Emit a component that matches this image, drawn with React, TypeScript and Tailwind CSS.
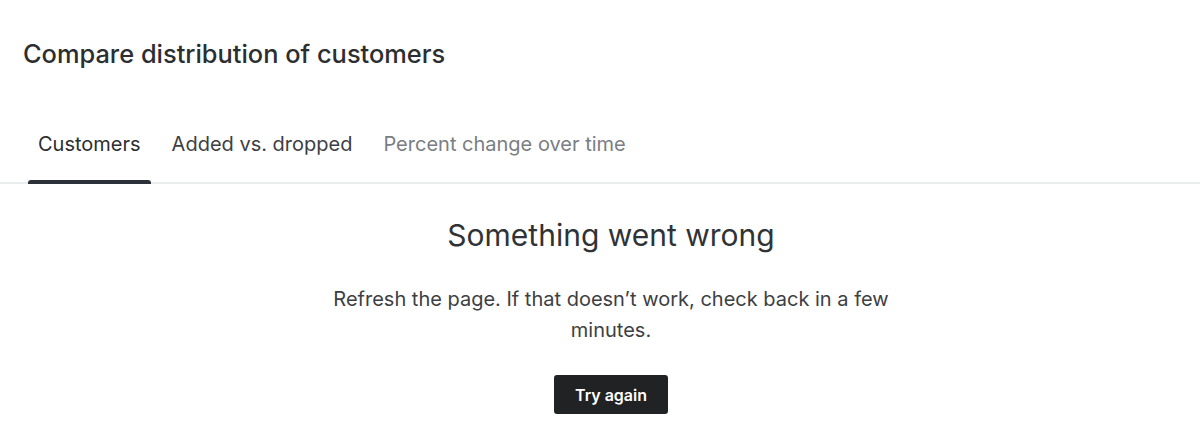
import React from "react";

const tabs = [
  { id: 1, name: "Customers", active: true, tone: "text-[#2c2e30]" },
  { id: 2, name: "Added vs. dropped", active: false, tone: "text-[#3d4043]" },
  { id: 3, name: "Percent change over time", active: false, tone: "text-[#7a7e83]" },
];

export default function App() {
  return (
    <div
      className="w-[1200px] h-[436px] bg-white overflow-hidden"
      style={{ fontFamily: "Inter, 'Liberation Sans', sans-serif" }}
    >
      <h1 className="pl-[23px] pt-[38px] text-[25.4px] leading-[32px] font-medium text-[#2c2e30]">
        Compare distribution of customers
      </h1>

      <div className="mt-[61px] flex gap-[11px] border-b-2 border-[#ebecee] pl-[28px]">
        {tabs.map((tab) => (
          <div key={tab.id} className="relative px-[10px] pb-[25px]">
            <span className={`block text-[20px] leading-[26px] ${tab.tone}`}>
              {tab.name}
            </span>
            {tab.active && (
              <div className="absolute left-0 right-0 -bottom-[2px] h-[4px] rounded-t-[3px] bg-[#2c3139]" />
            )}
          </div>
        ))}
      </div>

      <div className="flex flex-col items-center pl-[22px]">
        <h2 className="mt-[31px] text-[30px] leading-[40px] font-normal text-[#303336]">
          Something went wrong
        </h2>
        <p className="mt-[29px] w-[600px] text-center text-[20px] leading-[31px] text-[#3d4043]">
          Refresh the page. If that doesn’t work, check back in a few minutes.
        </p>
        <button className="mt-[29px] h-[39px] w-[114px] rounded-[3px] bg-[#202223] text-[16px] font-semibold text-white">
          Try again
        </button>
      </div>
    </div>
  );
}
